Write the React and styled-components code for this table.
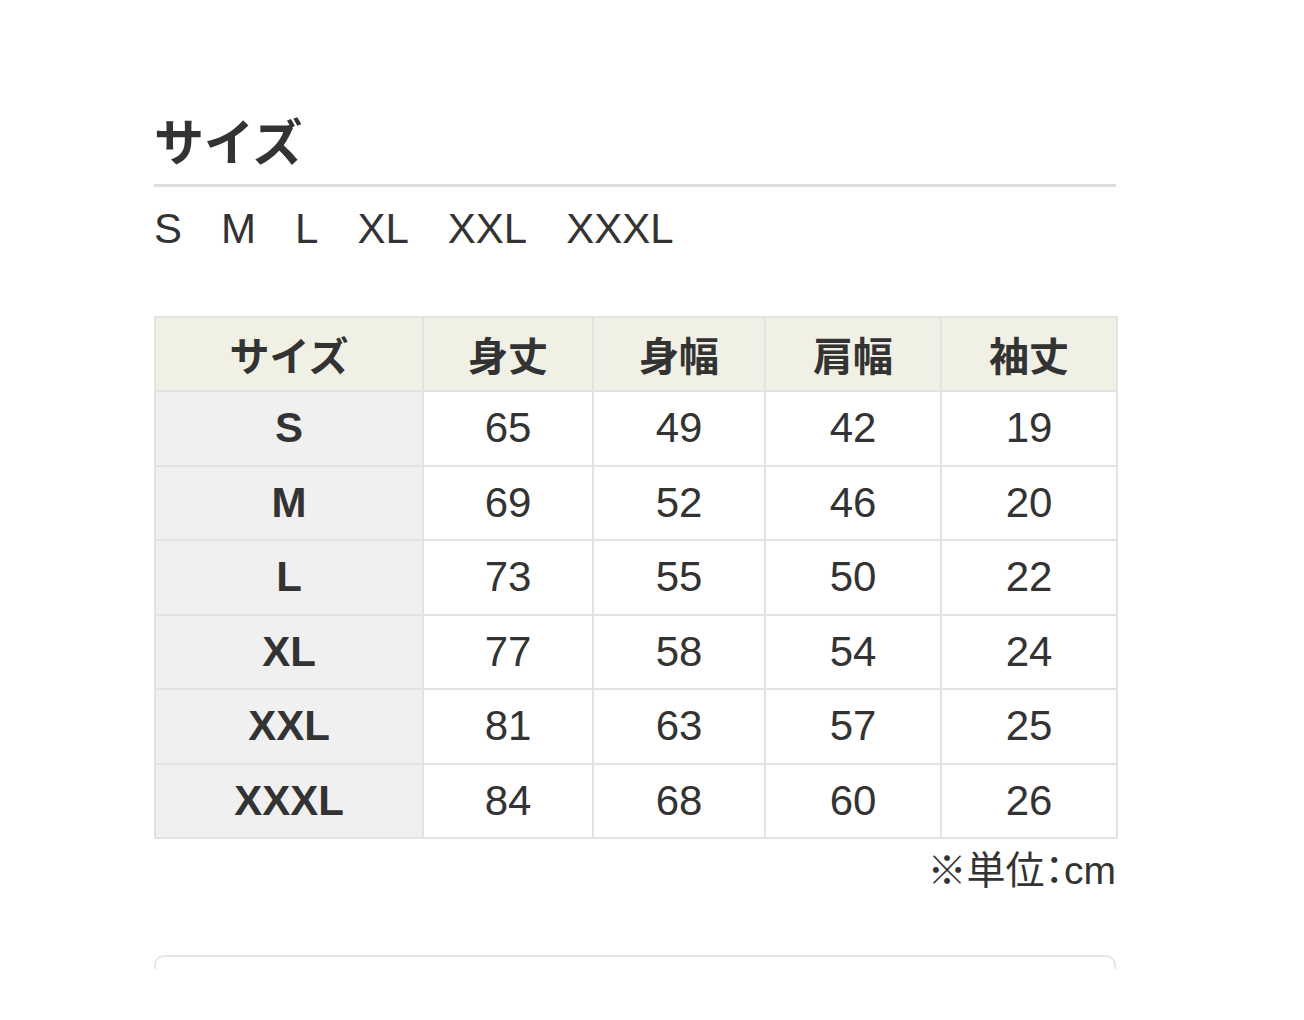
import React from 'react';
import styled, { createGlobalStyle } from 'styled-components';

const GlobalStyle = createGlobalStyle`
  body {
    margin: 0;
    background: #ffffff;
    font-family: "Liberation Sans", "Noto Sans CJK JP", sans-serif;
    color: #333333;
  }
`;

const Page = styled.div`
  width: 962px;
  padding: 104px 0 0 154px;
`;

const Title = styled.h2`
  margin: 0;
  font-size: 50px;
  font-weight: 700;
  line-height: 80px;
  color: #333;
  border-bottom: 3px solid #dddddd;
`;

const SizeList = styled.div`
  display: flex;
  gap: 39px;
  font-size: 42px;
  line-height: 48px;
  margin-top: 18px;
  color: #333;
`;

const Table = styled.table`
  margin-top: 63px;
  width: 962px;
  border-collapse: collapse;
  table-layout: fixed;
  border: 2px solid #e3e3e3;
`;

const Th = styled.th`
  height: 72px;
  padding: 0;
  background: #f0f0e4;
  border: 2px solid #e3e3e3;
  font-size: 40px;
  font-weight: 700;
  color: #333;
  text-align: center;
  vertical-align: middle;
`;

const Td = styled.td`
  height: 72.5px;
  padding: 0;
  border: 2px solid #e3e3e3;
  background: ${(p) => (p.$label ? '#f0f0f0' : '#ffffff')};
  font-size: 42px;
  font-weight: ${(p) => (p.$label ? 700 : 400)};
  color: #333;
  text-align: center;
  vertical-align: middle;
`;

const Note = styled.div`
  text-align: right;
  font-size: 39px;
  line-height: 48px;
  margin-top: 8px;
  color: #333;
  font-feature-settings: "palt";
`;

const NextCard = styled.div`
  margin-top: 60px;
  height: 12px;
  border: 2px solid #e6e6e6;
  border-bottom: none;
  border-radius: 10px 10px 0 0;
`;

const columns = ['サイズ', '身丈', '身幅', '肩幅', '袖丈'];
const widths = [268, 170, 172, 176, 176];

const rows = [
  ['S', 65, 49, 42, 19],
  ['M', 69, 52, 46, 20],
  ['L', 73, 55, 50, 22],
  ['XL', 77, 58, 54, 24],
  ['XXL', 81, 63, 57, 25],
  ['XXXL', 84, 68, 60, 26],
];

export default function App() {
  return (
    <>
      <GlobalStyle />
      <Page>
        <Title>サイズ</Title>
        <SizeList>
          {rows.map((r) => (
            <span key={r[0]}>{r[0]}</span>
          ))}
        </SizeList>
        <Table>
          <colgroup>
            {widths.map((w, i) => (
              <col key={i} style={{ width: w }} />
            ))}
          </colgroup>
          <thead>
            <tr>
              {columns.map((c) => (
                <Th key={c}>{c}</Th>
              ))}
            </tr>
          </thead>
          <tbody>
            {rows.map((r) => (
              <tr key={r[0]}>
                {r.map((v, i) => (
                  <Td key={i} $label={i === 0}>
                    {v}
                  </Td>
                ))}
              </tr>
            ))}
          </tbody>
        </Table>
        <Note>※単位：cm</Note>
        <NextCard />
      </Page>
    </>
  );
}
